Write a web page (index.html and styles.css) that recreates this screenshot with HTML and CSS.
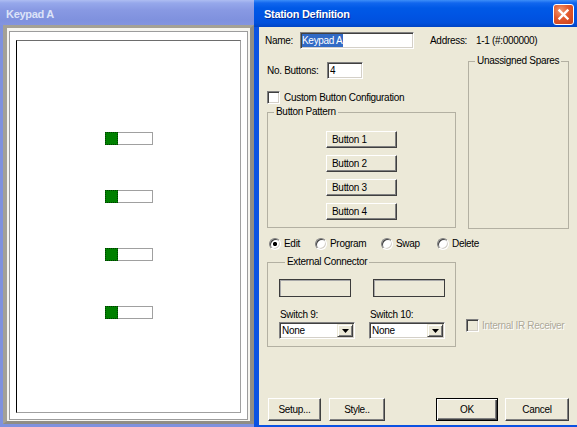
FILE: index.html
```html
<!DOCTYPE html>
<html>
<head>
<meta charset="utf-8">
<title>Station Definition</title>
<link rel="stylesheet" href="styles.css">
</head>
<body>
<div class="desk">
  <div class="lwin">
    <div class="ltitle">Keypad A</div>
    <div class="lbody">
      <div class="lframe">
        <div class="llight">
          <div class="louter">
            <div class="linner">
              <div class="ind"><span class="ind-on"></span><span class="ind-off"></span></div>
              <div class="ind"><span class="ind-on"></span><span class="ind-off"></span></div>
              <div class="ind"><span class="ind-on"></span><span class="ind-off"></span></div>
              <div class="ind"><span class="ind-on"></span><span class="ind-off"></span></div>
            </div>
          </div>
        </div>
      </div>
    </div>
  </div>

  <div class="dlg">
    <div class="dtitle">
      <span class="dtitle-text">Station Definition</span>
      <span class="close">
        <svg width="21" height="21" viewBox="0 0 21 21">
          <path d="M6.5 6.5 L14.5 14.5 M14.5 6.5 L6.5 14.5" stroke="#fff" stroke-width="2.4" stroke-linecap="square"/>
        </svg>
      </span>
    </div>
    <div class="dbody">
      <div class="row-name">
        <span class="lbl-name">Name:</span>
        <div class="input name-input"><span class="sel">Keypad A</span></div>
        <span class="lbl-addr">Address:</span>
        <span class="addr">1-1 (#:000000)</span>
      </div>

      <div class="cols">
        <div class="col-left">
          <div class="row-nb">
            <span class="lbl-nb">No. Buttons:</span>
            <div class="input nb-input">4</div>
          </div>
          <div class="row-check">
            <span class="check"></span>
            <span class="check-text">Custom Button Configuration</span>
          </div>
          <fieldset class="group gp-pattern">
            <legend>Button Pattern</legend>
            <div class="btn pbtn">Button 1</div>
            <div class="btn pbtn">Button 2</div>
            <div class="btn pbtn">Button 3</div>
            <div class="btn pbtn">Button 4</div>
          </fieldset>
          <div class="radios">
            <div class="ritem r1"><span class="radio on"></span><span class="rtext">Edit</span></div>
            <div class="ritem r2"><span class="radio"></span><span class="rtext">Program</span></div>
            <div class="ritem r3"><span class="radio"></span><span class="rtext">Swap</span></div>
            <div class="ritem r4"><span class="radio"></span><span class="rtext">Delete</span></div>
          </div>
          <fieldset class="group gp-ext">
            <legend>External Connector</legend>
            <div class="ext-cols">
              <div class="ext-col c1">
                <div class="conn"></div>
                <div class="sw-lbl">Switch 9:</div>
                <div class="select"><span class="sel-text">None</span><span class="dd"><svg width="7" height="4" viewBox="0 0 7 4"><path d="M0 0 H7 L3.5 4 Z" fill="#000"/></svg></span></div>
              </div>
              <div class="ext-col c2">
                <div class="conn"></div>
                <div class="sw-lbl">Switch 10:</div>
                <div class="select"><span class="sel-text">None</span><span class="dd"><svg width="7" height="4" viewBox="0 0 7 4"><path d="M0 0 H7 L3.5 4 Z" fill="#000"/></svg></span></div>
              </div>
            </div>
          </fieldset>
        </div>

        <div class="col-right">
          <fieldset class="group gp-spares">
            <legend>Unassigned Spares</legend>
          </fieldset>
          <div class="row-ir">
            <span class="check disabled"></span>
            <span class="dis-text">Internal IR Receiver</span>
          </div>
        </div>
      </div>

      <div class="bottom">
        <div class="btn b-setup">Setup...</div>
        <div class="btn b-style">Style..</div>
        <div class="btn b-ok">OK</div>
        <div class="btn b-cancel">Cancel</div>
      </div>
    </div>
  </div>
</div>
</body>
</html>
```

FILE: styles.css
```css
* { box-sizing: border-box; }
html, body { margin: 0; padding: 0; }
body {
  width: 577px;
  height: 427px;
  overflow: hidden;
  font-family: "Liberation Sans", Arial, sans-serif;
  font-size: 10px;
  letter-spacing: -0.3px;
  color: #000;
  background: #ece9d8;
}
.desk { display: flex; width: 577px; height: 427px; }

/* ---------- left (inactive) window ---------- */
.lwin { width: 254px; flex: none; display: flex; flex-direction: column; }
.ltitle {
  height: 25px;
  flex: none;
  padding: 8px 0 0 6px;
  line-height: 13px;
  font-size: 11px;
  font-weight: bold;
  color: #dce3f8;
  background: linear-gradient(#aebdf2 0px, #96a8eb 3px, #8899e3 10px, #7f91de 20px, #8394df 25px);
}
.lbody {
  flex: 1;
  display: flex;
  border-left: 3px solid #7f91de;
  border-bottom: 3px solid #7f91de;
}
.lframe {
  flex: 1;
  display: flex;
  border-style: solid;
  border-width: 3px 4px 3px 4px;
  border-color: #a4a196 #8f8d85 #8f8d85 #a4a196;
}
.llight {
  flex: 1;
  display: flex;
  padding: 3px 2px 1px 2px;
  background: #f6f5f0;
}
.louter {
  flex: 1;
  display: flex;
  border: 1px solid #9c9c9c;
  background: #fff;
  padding: 8px 6px 6px 6px;
}
.linner {
  flex: 1;
  display: flex;
  flex-direction: column;
  align-items: center;
  gap: 45px;
  padding-top: 91px;
  border-style: solid;
  border-width: 1px;
  border-color: #6d6d6d #a0a0a0 #a0a0a0 #000;
  background: #fff;
}
.ind { display: flex; width: 48px; height: 13px; }
.ind-on { width: 13px; background: #008000; border: 1px dotted #003800; }
.ind-off { flex: 1; background: #fff; border: 1px solid #a0a0a0; border-left: none; }

/* ---------- right (active) dialog ---------- */
.dlg { flex: 1; display: flex; flex-direction: column; }
.dtitle {
  height: 27px;
  flex: none;
  display: flex;
  justify-content: space-between;
  align-items: flex-start;
  padding: 0 3px 0 10px;
  color: #fff;
  font-size: 11px;
  font-weight: bold;
  background: linear-gradient(#3d8ef8 0px, #1166ee 3px, #0059e6 8px, #0054e3 16px, #0050dc 23px, #0044c4 27px);
}
.dtitle-text { padding-top: 8px; line-height: 13px; text-shadow: 1px 1px 0 #0a2a8a; }
.close {
  margin-top: 4px;
  width: 21px;
  height: 21px;
  display: flex;
  border: 1px solid #fff;
  border-radius: 3px;
  background: radial-gradient(circle at 35% 30%, #f29a72 0%, #e2592d 45%, #c8401a 100%);
}
.close svg { margin: -1px; }

.dbody {
  flex: 1;
  display: flex;
  flex-direction: column;
  padding: 5px 0 4px 8px;
  border-left: 5px solid #0a52e2;
  border-bottom: 2px solid #0a52e2;
  background: #ece9d8;
}

.input {
  background: #fff;
  border: 1px solid;
  border-color: #808080 #fff #fff #808080;
  box-shadow: inset 1px 1px 0 #404040, inset -1px -1px 0 #d4d0c8;
  display: flex;
  align-items: center;
  line-height: 12px;
}

.row-name { display: flex; align-items: center; height: 17px; margin-left: -2px; line-height: 12px; }
.lbl-name { width: 35px; }
.name-input { width: 114px; height: 17px; padding: 0 1px; }
.sel { background: #316ac5; color: #fff; line-height: 13px; padding-right: 1px; }
.lbl-addr { margin-left: 16px; width: 46px; }

.cols { display: flex; align-items: flex-start; }
.col-left { width: 189px; flex: none; display: flex; flex-direction: column; }
.col-right { width: 101px; flex: none; margin-left: 12px; display: flex; flex-direction: column; }

.row-nb { display: flex; align-items: center; margin-top: 13px; height: 17px; line-height: 12px; }
.lbl-nb { width: 60px; }
.nb-input { width: 36px; height: 17px; padding-left: 2px; }

.row-check { display: flex; align-items: center; margin-top: 12px; height: 13px; line-height: 12px; }
.check {
  width: 13px;
  height: 13px;
  flex: none;
  background: #fff;
  border: 1px solid;
  border-color: #808080 #fff #fff #808080;
  box-shadow: inset 1px 1px 0 #404040, inset -1px -1px 0 #d4d0c8;
}
.check-text { margin-left: 4px; }

.group {
  margin: 0;
  padding: 0;
  min-width: 0;
  border: 1px solid #b3b0a2;
}
.group legend {
  padding: 0 2px;
  margin-left: 6px;
  line-height: 12px;
  font-size: 10px;
}

.gp-pattern {
  margin-top: 2px;
  padding: 13px 0 7px 0;
  display: flex;
  flex-direction: column;
  align-items: center;
  gap: 7px;
}

.btn {
  display: flex;
  align-items: center;
  justify-content: center;
  background: #ece9d8;
  border: 1px solid;
  border-color: #fff #404040 #404040 #fff;
  box-shadow: inset -1px -1px 0 #808080;
  line-height: 12px;
}
.pbtn { width: 71px; height: 17px; justify-content: flex-start; padding-left: 5px; }

.radios { display: flex; align-items: center; height: 13px; margin-top: 9px; line-height: 12px; }
.ritem { display: flex; align-items: center; flex: none; }
.r1 { margin-left: 2px; width: 46px; }
.r2 { width: 66px; }
.r3 { width: 56px; }
.radio {
  width: 12px;
  height: 12px;
  flex: none;
  border-radius: 50%;
  border: 1px solid;
  border-color: #808080 #fff #fff #808080;
  box-shadow: inset 1px 1px 0 #404040, inset -1px -1px 0 #d4d0c8;
  background: #fff;
}
.radio.on { background: radial-gradient(circle, #000 0, #000 1.8px, #fff 2.4px); }
.rtext { margin-left: 3px; }

.gp-ext { margin-top: 6px; padding: 11px 0 7px 11px; }
.ext-cols { display: flex; }
.ext-col { width: 76px; flex: none; display: flex; flex-direction: column; }
.c2 { margin-left: 14px; }
.conn { width: 72px; height: 18px; border: 1px solid #3c3c3c; box-shadow: inset 1px 1px 0 #a8a8a8; }
.c2 .conn { margin-left: 4px; }
.sw-lbl { margin-top: 12px; margin-left: 1px; line-height: 12px; }
.select {
  margin-top: 1px;
  width: 76px;
  height: 17px;
  display: flex;
  align-items: stretch;
  background: #fff;
  border: 1px solid;
  border-color: #808080 #fff #fff #808080;
  box-shadow: inset 1px 1px 0 #404040, inset -1px -1px 0 #d4d0c8;
  padding: 1px 1px 1px 2px;
  line-height: 13px;
}
.sel-text { flex: 1; display: flex; align-items: center; }
.dd {
  width: 16px;
  display: flex;
  align-items: center;
  justify-content: center;
  background: #ece9d8;
  border: 1px solid;
  border-color: #ece9d8 #404040 #404040 #ece9d8;
  box-shadow: inset 1px 1px 0 #fff, inset -1px -1px 0 #808080;
}

.gp-spares { margin-top: 6px; height: 174px; }
.row-ir { display: flex; align-items: center; margin-top: 90px; margin-left: -2px; height: 13px; line-height: 12px; }
.check.disabled { background: #ece9d8; }
.dis-text { margin-left: 3px; color: #aca899; text-shadow: 1px 1px 0 #fff; }

.bottom { display: flex; margin-top: auto; height: 23px; }
.bottom .btn { height: 23px; }
.b-setup { margin-left: 1px; width: 53px; }
.b-style { margin-left: 8px; width: 56px; }
.b-ok {
  margin-left: auto;
  width: 62px;
  border: 1px solid #000;
  box-shadow: inset 1px 1px 0 #fff, inset -1px -1px 0 #404040, inset -2px -2px 0 #808080;
}
.b-cancel { margin-left: 7px; margin-right: 8px; width: 64px; }
```
